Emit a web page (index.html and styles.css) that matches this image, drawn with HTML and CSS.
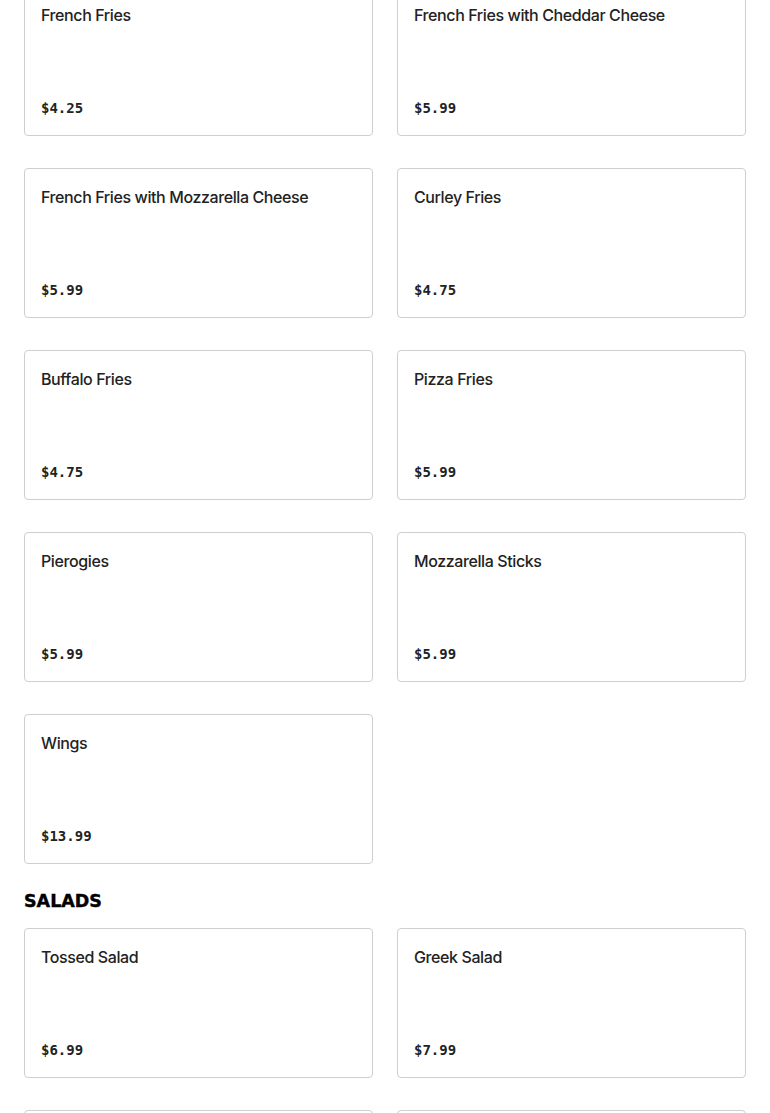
FILE: index.html
```html
<!DOCTYPE html>
<html>
<head>
<meta charset="utf-8">
<link rel="stylesheet" href="styles.css">
</head>
<body>
<main class="menu">
  <section class="section">
    <div class="grid">
      <div class="card"><div class="name">French Fries</div><div class="price">$4.25</div></div>
      <div class="card"><div class="name">French Fries with Cheddar Cheese</div><div class="price">$5.99</div></div>
      <div class="card"><div class="name">French Fries with Mozzarella Cheese</div><div class="price">$5.99</div></div>
      <div class="card"><div class="name">Curley Fries</div><div class="price">$4.75</div></div>
      <div class="card"><div class="name">Buffalo Fries</div><div class="price">$4.75</div></div>
      <div class="card"><div class="name">Pizza Fries</div><div class="price">$5.99</div></div>
      <div class="card"><div class="name">Pierogies</div><div class="price">$5.99</div></div>
      <div class="card"><div class="name">Mozzarella Sticks</div><div class="price">$5.99</div></div>
      <div class="card"><div class="name">Wings</div><div class="price">$13.99</div></div>
    </div>
  </section>
  <section class="section">
    <h2 class="heading">SALADS</h2>
    <div class="grid">
      <div class="card"><div class="name">Tossed Salad</div><div class="price">$6.99</div></div>
      <div class="card"><div class="name">Greek Salad</div><div class="price">$7.99</div></div>
      <div class="card"><div class="name">Chef Salad</div><div class="price">$8.99</div></div>
      <div class="card"><div class="name">Grilled Chicken Salad</div><div class="price">$9.99</div></div>
    </div>
  </section>
</main>
</body>
</html>
```

FILE: styles.css
```css
html, body {
  margin: 0;
  padding: 0;
  background: #ffffff;
}
.menu {
  margin-top: -14px;
  padding: 0 24px;
  display: flex;
  flex-direction: column;
  gap: 25px;
}
.section {
  display: flex;
  flex-direction: column;
}
.grid {
  display: grid;
  grid-template-columns: 1fr 1fr;
  column-gap: 24px;
  row-gap: 32px;
}
.card {
  box-sizing: border-box;
  height: 150px;
  border: 1px solid #cfcfcf;
  border-radius: 4px;
  padding: 16px 16px 17px;
  display: flex;
  flex-direction: column;
  justify-content: space-between;
  background: #fff;
}
.name {
  font-family: Inter, "Liberation Sans", sans-serif;
  font-weight: 500;
  font-size: 16px;
  letter-spacing: -0.4px;
  line-height: 24px;
  color: #222;
}
.price {
  font-family: "DejaVu Sans Mono", monospace;
  font-weight: 600;
  font-size: 14px;
  line-height: 20px;
  color: #222;
}
.heading {
  margin: 0 0 15px;
  font-family: "DejaVu Sans", sans-serif;
  font-weight: 900;
  font-size: 17.5px;
  line-height: 24px;
  color: #000;
  -webkit-text-stroke: 0.4px #000;
}
```
